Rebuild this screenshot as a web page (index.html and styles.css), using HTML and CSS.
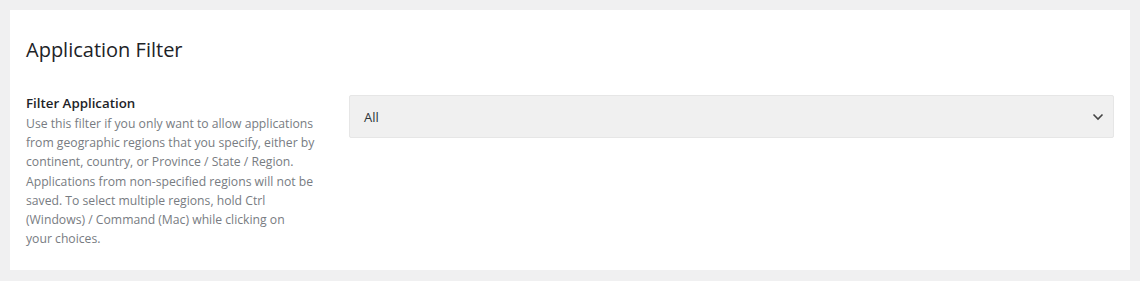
FILE: index.html
```html
<!DOCTYPE html>
<html>
<head>
<meta charset="utf-8">
<link rel="stylesheet" href="styles.css">
</head>
<body>
<div class="card">
  <h2 class="title">Application Filter</h2>
  <div class="row">
    <div class="label-col">
      <div class="label">Filter Application</div>
      <p class="desc">Use this filter if you only want to allow applications from geographic regions that you specify, either by continent, country, or Province / State / Region. Applications from non-specified regions will not be saved. To select multiple regions, hold Ctrl (Windows) / Command (Mac) while clicking on<br>your choices.</p>
    </div>
    <div class="field-col">
      <div class="select">
        <span class="value">All</span>
        <svg class="chev" width="12" height="8" viewBox="0 0 12 8"><path d="M1.5 1.5 L6 6 L10.5 1.5" fill="none" stroke="#444" stroke-width="1.6"/></svg>
      </div>
    </div>
  </div>
</div>
</body>
</html>
```
FILE: styles.css
```css
html, body {
  margin: 0;
  padding: 0;
  background: #f0f0f1;
}
body {
  padding: 10px;
  font-family: "Open Sans", "Noto Sans", sans-serif;
  color: #1d2327;
}
.card {
  background: #fff;
  padding: 26px 16px 21px 16px;
  height: 213px;
}
.title {
  margin: 0;
  font-size: 20px;
  font-weight: 400;
  line-height: 28px;
  color: #1d2327;
}
.row {
  display: grid;
  grid-template-columns: 323px 1fr;
  margin-top: 31px;
}
.label-col {
  width: 292px;
  padding-top: 2px;
}
.label {
  font-size: 13.3px;
  font-weight: 600;
  line-height: 20px;
  color: #1d2327;
  margin-top: -4px;
  margin-bottom: 1px;
}
.desc {
  margin: 0;
  font-size: 12.2px;
  line-height: 19.2px;
  color: #787c82;
}
.select {
  display: flex;
  align-items: center;
  justify-content: space-between;
  height: 41px;
  background: #f0f0f0;
  border: 1px solid #e6e6e6;
  border-radius: 2px;
  padding: 0 9px 0 14px;
  font-size: 13px;
  color: #2c3338;
}
```
